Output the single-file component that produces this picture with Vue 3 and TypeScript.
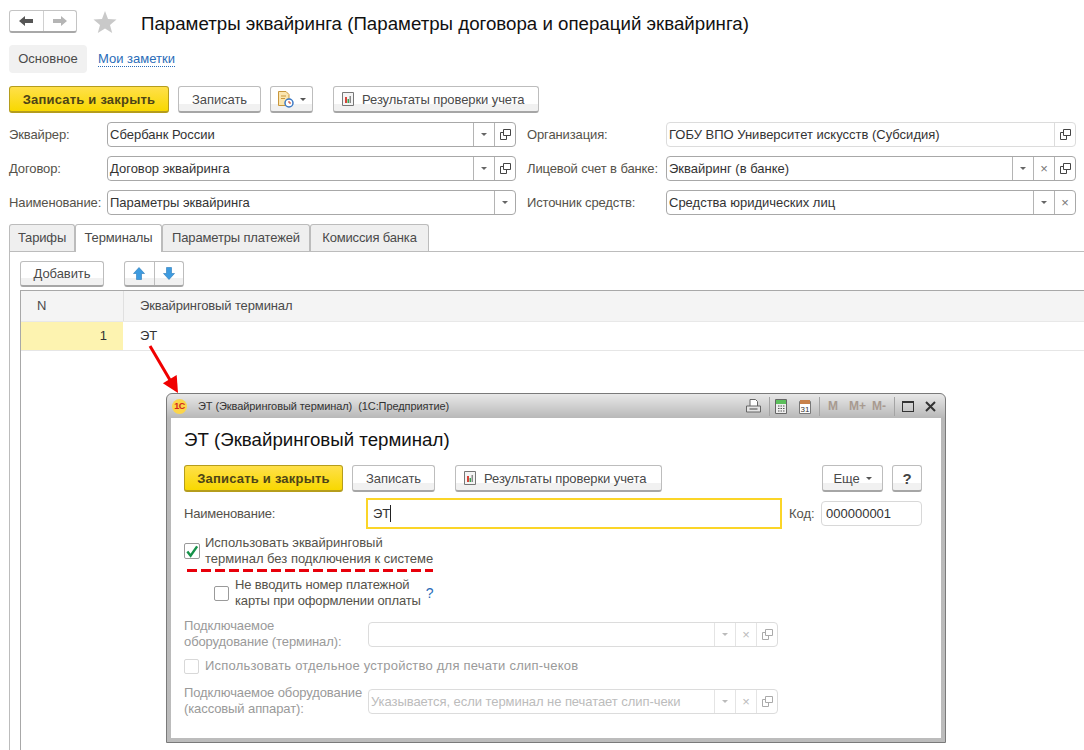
<script setup lang="ts">
type Field = {
  label: string
  value: string
  drop?: boolean
  clear?: boolean
  open?: boolean
  soft?: boolean
}

const leftFields: Field[] = [
  { label: 'Эквайрер:', value: 'Сбербанк России', drop: true, open: true },
  { label: 'Договор:', value: 'Договор эквайринга', drop: true, open: true },
  { label: 'Наименование:', value: 'Параметры эквайринга', drop: true },
]

const rightFields: Field[] = [
  { label: 'Организация:', value: 'ГОБУ ВПО Университет искусств (Субсидия)', open: true, soft: true },
  { label: 'Лицевой счет в банке:', value: 'Эквайринг (в банке)', drop: true, clear: true, open: true },
  { label: 'Источник средств:', value: 'Средства юридических лиц', drop: true, clear: true },
]

const tabs = ['Тарифы', 'Терминалы', 'Параметры платежей', 'Комиссия банка']
</script>

<template>
  <div class="page">
    <header class="head">
      <div class="nav">
        <span class="nav-btn">
          <svg width="14" height="10" viewBox="0 0 14 10"><path d="M0 5 L6 0 V3 H14 V7 H6 V10 Z" fill="#555" /></svg>
        </span>
        <span class="nav-btn">
          <svg width="14" height="10" viewBox="0 0 14 10"><path d="M14 5 L8 0 V3 H0 V7 H8 V10 Z" fill="#b5b5b5" /></svg>
        </span>
      </div>
      <svg class="star" width="24" height="24" viewBox="0 0 24 24"><path d="M12 1 L15 9 L23.500 9.500 L17 15 L19.200 23 L12 18.500 L4.800 23 L7 15 L.5 9.500 L9 9 Z" fill="#c9c9c9" /></svg>
      <h1 class="title">Параметры эквайринга (Параметры договора и операций эквайринга)</h1>
    </header>

    <nav class="sections">
      <span class="section-on">Основное</span>
      <a class="section-link">Мои заметки</a>
    </nav>

    <div class="toolbar">
      <button class="btn primary w160">Записать и закрыть</button>
      <button class="btn w83">Записать</button>
      <button class="btn w43">
        <svg width="17" height="18" viewBox="0 0 17 18">
          <path d="M1.500 1.500 H9 L12 4.500 V15.500 H1.500 Z" fill="#fbe6b0" stroke="#c8963c" />
          <path d="M4 6 H9 M4 8.500 H8" stroke="#c8963c" />
          <circle cx="12" cy="13" r="4" fill="#fff" stroke="#3b78c4" stroke-width="1.500" />
          <path d="M12 11 V13 H14" stroke="#c0392b" fill="none" />
        </svg>
        <i class="caret dark" />
      </button>
      <button class="btn w206 report">
        <svg class="rep" width="12" height="14" viewBox="0 0 12 14">
          <path d="M.5 .5 H11.500 V13.500 H.5 Z" fill="#f4f4f4" stroke="#777" />
          <path d="M3 5 H5 V11 H3 Z" fill="#d9433a" /><path d="M5.500 7 H7 V11 H5.500 Z" fill="#3aa655" /><path d="M7.500 4 H9 V11 H7.500 Z" fill="#8a8a8a" />
        </svg>
        Результаты проверки учета
      </button>
    </div>

    <section class="fields">
      <div class="col">
        <div v-for="f in leftFields" :key="f.label" class="row">
          <label class="lbl left">{{ f.label }}</label>
          <div class="input" :class="{ soft: f.soft }">
            <span class="val">{{ f.value }}</span>
            <span v-if="f.drop" class="cell"><i class="caret" /></span>
            <span v-if="f.clear" class="cell x">×</span>
            <span v-if="f.open" class="cell">
              <svg width="11" height="11" viewBox="0 0 11 11"><path d="M3.500 .5 H10.500 V6.500 H3.500 Z M3.500 3.500 H.5 V10.500 H6.500 V6.500" fill="none" stroke="#444" /></svg>
            </span>
          </div>
        </div>
      </div>
      <div class="col right">
        <div v-for="f in rightFields" :key="f.label" class="row">
          <label class="lbl rightlbl">{{ f.label }}</label>
          <div class="input" :class="{ soft: f.soft }">
            <span class="val">{{ f.value }}</span>
            <span v-if="f.drop" class="cell"><i class="caret" /></span>
            <span v-if="f.clear" class="cell x">×</span>
            <span v-if="f.open" class="cell">
              <svg width="11" height="11" viewBox="0 0 11 11"><path d="M3.500 .5 H10.500 V6.500 H3.500 Z M3.500 3.500 H.5 V10.500 H6.500 V6.500" fill="none" stroke="#444" /></svg>
            </span>
          </div>
        </div>
      </div>
    </section>

    <div class="tabs">
      <span v-for="(t, i) in tabs" :key="t" class="tab" :class="[{ active: i === 1 }, 'tab' + i]">{{ t }}</span>
    </div>

    <section class="panel">
      <div class="panel-bar">
        <button class="btn add">Добавить</button>
        <div class="updown">
          <span class="ud">
            <svg width="12" height="13" viewBox="0 0 12 13"><path d="M6 .5 L11.500 6.500 H8.500 V12.500 H3.500 V6.500 H.5 Z" fill="#3d9be0" stroke="#2a78b8" stroke-width=".6" /></svg>
          </span>
          <span class="ud">
            <svg width="12" height="13" viewBox="0 0 12 13"><path d="M6 12.500 L11.500 6.500 H8.500 V.5 H3.500 V6.500 H.5 Z" fill="#3d9be0" stroke="#2a78b8" stroke-width=".6" /></svg>
          </span>
        </div>
      </div>
      <div class="table">
        <div class="thead">
          <span class="th-n">N</span>
          <span class="th-t">Эквайринговый терминал</span>
        </div>
        <div class="tr">
          <span class="td-n">1</span>
          <span class="td-t">ЭТ</span>
        </div>
      </div>
    </section>

    <svg class="arrow" width="40" height="50" viewBox="0 0 40 50">
      <path d="M2 2 L22 36" stroke="#f00000" stroke-width="3" />
      <path d="M30 49 L14.900 39.300 L28.700 31.100 Z" fill="#f00000" />
    </svg>

    <div class="window">
      <div class="titlebar">
        <span class="logo">1С</span>
        <span class="win-title">ЭТ (Эквайринговый терминал)&nbsp; (1С:Предприятие)</span>
        <div class="win-tools">
          <svg class="t-print" width="15" height="14" viewBox="0 0 15 14">
            <path d="M4 .5 H9.500 L11.500 2.500 V7.500 H4 Z" fill="#fff" stroke="#666" />
            <path d="M.5 7 H14.500 V13 H.5 Z" fill="#e4e4e4" stroke="#666" />
            <path d="M3.500 10 H11.500" stroke="#444" />
          </svg>
          <i class="sep" />
          <svg class="t-calc" width="12" height="15" viewBox="0 0 12 15">
            <path d="M.5 .5 H11.500 V14.500 H.5 Z" fill="#eee" stroke="#666" />
            <path d="M1 1 H11 V5 H1 Z" fill="#5cbf5c" />
            <path d="M3 7 H4.500 M5.500 7 H7 M8 7 H9.500 M3 9.500 H4.500 M5.500 9.500 H7 M8 9.500 H9.500 M3 12 H4.500 M5.500 12 H7 M8 12 H9.500" stroke="#555" />
          </svg>
          <svg class="t-cal" width="12" height="15" viewBox="0 0 12 15">
            <path d="M.5 2.500 H11.500 V14.500 H.5 Z" fill="#fff" stroke="#777" />
            <path d="M1 1 H11 V5 H1 Z" fill="#c8814a" />
            <text x="6" y="13" text-anchor="middle" class="cal-num">31</text>
          </svg>
          <i class="sep" />
          <span class="mem m1">M</span>
          <span class="mem m2">M+</span>
          <span class="mem m3">M-</span>
          <i class="sep" />
          <span class="maxi" />
          <svg class="close" width="11" height="11" viewBox="0 0 11 11"><path d="M1 1 L10 10 M10 1 L1 10" stroke="#333" stroke-width="2" /></svg>
        </div>
      </div>

      <div class="win-body">
        <h2 class="win-h">ЭТ (Эквайринговый терминал)</h2>

        <div class="win-bar">
          <button class="btn primary w159">Записать и закрыть</button>
          <button class="btn w83">Записать</button>
          <button class="btn w207 report">
            <svg class="rep" width="12" height="14" viewBox="0 0 12 14">
              <path d="M.5 .5 H11.500 V13.500 H.5 Z" fill="#f4f4f4" stroke="#777" />
              <path d="M3 5 H5 V11 H3 Z" fill="#d9433a" /><path d="M5.500 7 H7 V11 H5.500 Z" fill="#3aa655" /><path d="M7.500 4 H9 V11 H7.500 Z" fill="#8a8a8a" />
            </svg>
            Результаты проверки учета
          </button>
          <button class="btn more">Еще <i class="caret dark" /></button>
          <button class="btn help">?</button>
        </div>

        <div class="name-row">
          <label class="name-lbl">Наименование:</label>
          <div class="name-input">ЭТ<i class="cursor" /></div>
          <label class="code-lbl">Код:</label>
          <div class="code-input">000000001</div>
        </div>

        <div class="chk-row main">
          <span class="box">
            <svg width="15" height="15" viewBox="0 0 15 15"><path d="M2.500 7.500 L6 12 L13 2" fill="none" stroke="#16924a" stroke-width="2.600" /></svg>
          </span>
          <span class="chk-text">Использовать эквайринговый<br />терминал без подключения к системе</span>
        </div>
        <div class="dash" />

        <div class="chk-row sub">
          <span class="box" />
          <span class="chk-text">Не вводить номер платежной<br />карты при оформлении оплаты</span>
          <span class="hint">?</span>
        </div>

        <div class="dis-row first">
          <label class="dis-lbl">Подключаемое<br />оборудование (терминал):</label>
          <div class="dis-input">
            <span class="val" />
            <span class="cell"><i class="caret light" /></span>
            <span class="cell x">×</span>
            <span class="cell">
              <svg width="11" height="11" viewBox="0 0 11 11"><path d="M3.500 .5 H10.500 V6.500 H3.500 Z M3.500 3.500 H.5 V10.500 H6.500 V6.500" fill="none" stroke="#aaa" /></svg>
            </span>
          </div>
        </div>

        <div class="chk-row dis-chk">
          <span class="box light" />
          <span class="chk-text">Использовать отдельное устройство для печати слип-чеков</span>
        </div>

        <div class="dis-row last">
          <label class="dis-lbl">Подключаемое оборудование<br />(кассовый аппарат):</label>
          <div class="dis-input">
            <span class="val ph">Указывается, если терминал не печатает слип-чеки</span>
            <span class="cell"><i class="caret light" /></span>
            <span class="cell x">×</span>
            <span class="cell">
              <svg width="11" height="11" viewBox="0 0 11 11"><path d="M3.500 .5 H10.500 V6.500 H3.500 Z M3.500 3.500 H.5 V10.500 H6.500 V6.500" fill="none" stroke="#aaa" /></svg>
            </span>
          </div>
        </div>
      </div>
    </div>
  </div>
</template>

<style>
html, body { margin: 0; background: #fff; }
</style>

<style scoped>
.page {
  position: relative;
  width: 1084px;
  height: 750px;
  overflow: hidden;
  background: #fff;
  font-family: "Liberation Sans", Arial, sans-serif;
  font-size: 13px;
  color: #4a4a4a;
}
.head {
  display: flex;
  align-items: center;
  height: 23px;
  padding: 10px 0 0 9px;
}
.nav {
  display: flex;
  width: 68px;
  height: 23px;
  box-sizing: border-box;
  border: 1px solid #c4c4c4;
  border-bottom: 2px solid #a8a8a8;
  border-radius: 3px;
}
.nav-btn {
  flex: 1;
  display: flex;
  align-items: center;
  justify-content: center;
}
.nav-btn + .nav-btn { border-left: 1px solid #d0d0d0; }
.star { margin-left: 16px; }
.title {
  margin: 5px 0 0 24px;
  font-size: 18.700px;
  font-weight: 400;
  color: #111;
  white-space: nowrap;
}
.sections {
  display: flex;
  align-items: center;
  gap: 11px;
  margin: 12px 0 0 9px;
}
.section-on {
  width: 78px;
  height: 28px;
  line-height: 28px;
  text-align: center;
  background: #f1f1f1;
  border-radius: 4px;
}
.section-link {
  color: #2a6cb8;
  border-bottom: 1px dotted #2a6cb8;
  line-height: 15px;
}
.toolbar {
  display: flex;
  margin: 13px 0 0 9px;
}
.btn {
  height: 27px;
  padding: 0;
  box-sizing: border-box;
  font: inherit;
  letter-spacing: -.08px;
  color: #4a4a4a;
  border: 1px solid #bdbdbd;
  border-bottom: 2px solid #a6a6a6;
  border-radius: 3px;
  background: linear-gradient(#fff 0 70%, #f1f1f1 70%);
  display: inline-flex;
  align-items: center;
  justify-content: center;
  white-space: nowrap;
}
.primary {
  font-weight: 700;
  color: #4d4416;
  letter-spacing: .2px;
  border-color: #b59d1c;
  background: linear-gradient(#ffe04a, #f8d800);
}
.w160 { width: 160px; margin-right: 9px; }
.w159 { width: 159px; margin-right: 9px; }
.w83 { width: 83px; margin-right: 9px; }
.w43 { width: 43px; margin-right: 20px; gap: 6px; }
.w206 { width: 206px; }
.w207 { width: 207px; }
.report { justify-content: flex-start; padding-left: 8px; }
.rep { margin-right: 8px; }
.caret {
  display: inline-block;
  width: 0;
  height: 0;
  border-left: 3px solid transparent;
  border-right: 3px solid transparent;
  border-top: 3px solid #666;
}
.caret.dark { border-top-color: #555; }
.caret.light { border-top-color: #bbb; }
.fields {
  display: flex;
  margin: 9px 0 0 9px;
}
.col {
  width: 507px;
  display: flex;
  flex-direction: column;
  gap: 9px;
}
.col.right {
  width: 549px;
  margin-left: 11px;
}
.row {
  display: flex;
  align-items: center;
  height: 25px;
}
.lbl { white-space: nowrap; color: #55524a; letter-spacing: -.12px; }
.left { width: 98px; flex: none; }
.rightlbl { width: 139px; flex: none; }
.input {
  flex: 1;
  height: 25px;
  display: flex;
  box-sizing: border-box;
  background: #fff;
  border: 1px solid #a8a8a8;
  border-radius: 4px;
  color: #333;
}
.input.soft { border-color: #dcdcdc; }
.val {
  flex: 1;
  padding-left: 2px;
  line-height: 24px;
  white-space: nowrap;
  overflow: hidden;
}
.cell {
  flex: none;
  width: 20px;
  display: flex;
  align-items: center;
  justify-content: center;
  border-left: 1px solid #b4b4b4;
  color: #777;
}
.input.soft .cell { border-left-color: #dcdcdc; }
.tabs {
  display: flex;
  margin: 9px 0 0 9px;
  height: 27px;
}
.tab {
  box-sizing: border-box;
  height: 27px;
  line-height: 25px;
  letter-spacing: -.15px;
  text-align: center;
  background: #efefef;
  border: 1px solid #bcbcbc;
  border-bottom: none;
  border-radius: 3px 3px 0 0;
  white-space: nowrap;
}
.tab0 { width: 66px; }
.tab1 { width: 87px; }
.tab2 { width: 148px; }
.tab3 { width: 119px; }
.tab.active {
  height: 28px;
  position: relative;
  z-index: 1;
  background: #fff;
}
.panel {
  box-sizing: border-box;
  height: 499px;
  margin-left: 9px;
  padding: 9px 0 0 10px;
  border-top: 1px solid #bcbcbc;
  border-left: 1px solid #bcbcbc;
}
.panel-bar {
  display: flex;
  height: 26px;
}
.add { width: 84px; height: 26px; }
.updown {
  display: flex;
  width: 60px;
  height: 26px;
  margin-left: 20px;
  box-sizing: border-box;
  border: 1px solid #bdbdbd;
  border-bottom: 2px solid #a6a6a6;
  border-radius: 3px;
  background: linear-gradient(#fff 0 70%, #f1f1f1 70%);
}
.ud {
  flex: 1;
  display: flex;
  align-items: center;
  justify-content: center;
}
.ud + .ud { border-left: 1px solid #bdbdbd; }
.table {
  height: 460px;
  margin-top: 3px;
  border-top: 1px solid #a8a8a8;
  border-left: 1px solid #a8a8a8;
}
.thead {
  display: flex;
  height: 30px;
  line-height: 29px;
  background: #f4f4f4;
  border-bottom: 1px solid #e8e8e8;
}
.th-n {
  box-sizing: border-box;
  width: 103px;
  padding-left: 16px;
  border-right: 1px solid #e0e0e0;
}
.th-t { padding-left: 16px; letter-spacing: -.13px; }
.tr {
  display: flex;
  height: 28px;
  line-height: 28px;
  border-bottom: 1px solid #e6e6e6;
  color: #333;
}
.td-n {
  box-sizing: border-box;
  width: 102px;
  padding-right: 16px;
  text-align: right;
  background: #fdf3b0;
}
.td-t { padding-left: 17px; }
.arrow {
  position: absolute;
  left: 148px;
  top: 344px;
  z-index: 3;
}
.window {
  position: absolute;
  left: 166px;
  top: 393px;
  z-index: 2;
  width: 780px;
  height: 350px;
  box-sizing: border-box;
  border: 1px solid #7a7a7a;
  border-radius: 6px 6px 0 0;
  padding: 0 4px 4px;
  background: linear-gradient(#e8e8e8, #b8b8b8 24px, #bcbcbc);
}
.titlebar {
  display: flex;
  align-items: center;
  height: 24px;
}
.logo {
  width: 15px;
  height: 15px;
  margin-left: 1px;
  border-radius: 50%;
  background: #fbd54a;
  color: #d2261c;
  font-size: 9px;
  font-weight: 700;
  letter-spacing: -.5px;
  line-height: 15px;
  text-align: center;
}
.win-title {
  margin-left: 11px;
  font-size: 11px;
  letter-spacing: -.08px;
  color: #333;
  white-space: nowrap;
}
.win-tools {
  display: flex;
  align-items: center;
  margin-left: auto;
  padding-right: 5px;
}
.sep {
  width: 1px;
  height: 19px;
  margin-left: 8px;
  background: #a4a4a4;
}
.t-calc { margin-left: 5px; }
.t-cal { margin-left: 12px; }
.cal-num { font-size: 8px; fill: #333; }
.mem { font-weight: 700; font-size: 12px; color: #a89a90; }
.m1 { margin-left: 8px; }
.m2 { margin-left: 11px; }
.m3 { margin-left: 6px; }
.maxi {
  width: 10px;
  height: 8px;
  border: 1px solid #333;
  border-top-width: 2px;
  margin-left: 7px;
}
.close { margin-left: 11px; }
.win-body {
  height: 320px;
  box-sizing: border-box;
  background: #fff;
  padding: 0 19px 0 13px;
  position: relative;
}
.win-h {
  margin: 0;
  padding-top: 11px;
  height: 36px;
  font-size: 18.700px;
  line-height: 22px;
  font-weight: 400;
  color: #111;
  white-space: nowrap;
}
.win-bar {
  display: flex;
}
.win-bar .w83 { margin-right: 20px; }
.more {
  width: 61px;
  margin-left: auto;
  gap: 6px;
}
.help {
  width: 30px;
  margin-left: 9px;
  font-size: 15px;
  font-weight: 700;
  color: #444;
}
.name-row {
  display: flex;
  align-items: center;
  height: 31px;
  margin-top: 6px;
}
.name-lbl { width: 182px; flex: none; color: #55524a; letter-spacing: -.2px; }
.name-input {
  box-sizing: border-box;
  width: 416px;
  height: 31px;
  padding-left: 5px;
  line-height: 27px;
  border: 2px solid #fbd528;
  color: #333;
  display: flex;
  align-items: center;
}
.cursor {
  width: 1px;
  height: 17px;
  background: #222;
}
.code-lbl { margin-left: 7px; width: 32px; flex: none; color: #55524a; }
.code-input {
  box-sizing: border-box;
  width: 101px;
  height: 25px;
  padding-left: 4px;
  line-height: 23px;
  border: 1px solid #d8d8d8;
  border-radius: 4px;
  color: #333;
}
.chk-row {
  display: flex;
  align-items: center;
  line-height: 16px;
}
.chk-row .box {
  flex: none;
  box-sizing: border-box;
  width: 15px;
  height: 15px;
  margin-right: 6px;
  border: 1px solid #9a9a9a;
  border-radius: 2px;
  display: flex;
  align-items: center;
  justify-content: center;
}
.chk-text { color: #55524a; white-space: nowrap; }
.chk-row .box.light { border-color: #d8d8d8; }
.main { margin-top: 6px; }
.main .box { width: 16px; height: 16px; margin-right: 5px; }
.dash {
  width: 246px;
  height: 3px;
  margin: 2px 0 0 3px;
  background: repeating-linear-gradient(90deg, #e8000b 0 10px, transparent 10px 14px);
}
.sub { margin: 5px 0 0 30px; }
.sub .chk-text { letter-spacing: -.15px; }
.hint {
  margin-left: 5px;
  font-size: 14px;
  color: #2a6cb8;
}
.dis-row {
  display: flex;
  align-items: center;
  height: 32px;
}
.dis-row.first { margin-top: 9px; }
.dis-row.last { margin-top: 11px; }
.dis-lbl {
  width: 184px;
  flex: none;
  color: #9a9a9a;
  line-height: 16px;
  letter-spacing: -.1px;
  white-space: nowrap;
}
.dis-input {
  box-sizing: border-box;
  width: 410px;
  height: 25px;
  display: flex;
  border: 1px solid #dcdcdc;
  border-radius: 4px;
  color: #bbb;
}
.dis-input .cell {
  border-left-color: #e4e4e4;
  color: #bbb;
}
.ph { color: #bcbcbc; letter-spacing: -.06px; }
.dis-chk { margin-top: 8px; }
.dis-chk .chk-text { color: #9a9a9a; letter-spacing: .22px; }
</style>
